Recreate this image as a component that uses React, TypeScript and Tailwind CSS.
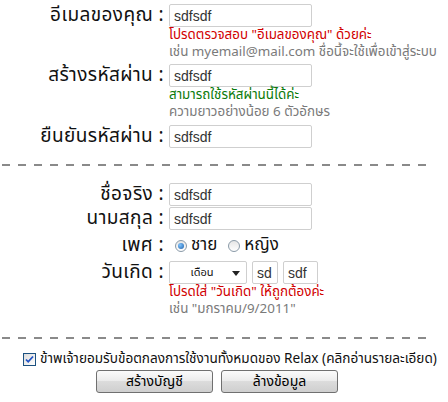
import React from 'react';

const thai = "font-[family-name:Tahoma,'Noto_Sans_Thai','Noto_Sans','DejaVu_Sans',sans-serif]";

const TextBox = ({ value, width = 'w-[143px]' }: { value: string; width?: string }) => (
  <input
    readOnly
    value={value}
    className={`${width} h-[23px] border border-[#cfcfcf] rounded-[2px] bg-white px-[4px] text-[14px] text-[#333] font-[family-name:'Liberation_Sans',Arial,sans-serif] outline-none`}
  />
);

const Row = ({ label, children, className = '' }: { label: string; children: React.ReactNode; className?: string }) => (
  <div className={`flex items-start ${className}`}>
    <div className="w-[165px] h-[23px] shrink-0 text-right text-[19px] leading-[23px] tracking-[0.4px] text-[#111] pr-[1px] whitespace-nowrap">{label}</div>
    <div className="ml-[4px] flex flex-col">{children}</div>
  </div>
);

const Divider = () => (
  <div className="ml-[2px] w-[430px] h-[2px] bg-[repeating-linear-gradient(to_right,#8a8a8a_0_8px,transparent_8px_16px)]" />
);

const Radio = ({ checked }: { checked?: boolean }) => (
  <span className="inline-flex w-[12px] h-[12px] rounded-full border border-[#8a9aa8] bg-[linear-gradient(#e6e6e6,#ffffff)] items-center justify-center">
    {checked && <span className="w-[6px] h-[6px] rounded-full bg-[radial-gradient(circle_at_35%_35%,#7fc4ff,#1e5fa8)]" />}
  </span>
);

const Button = ({ children }: { children: React.ReactNode }) => (
  <button className="w-[117px] h-[23px] border border-[#707070] rounded-[3px] bg-[linear-gradient(#fbfbfb,#ececec_45%,#dcdcdc_50%,#cfcfcf)] text-[14px] leading-[21px] text-black">
    {children}
  </button>
);

const Note = ({ color, children }: { color: string; children: React.ReactNode }) => (
  <div className={`h-[17px] text-[13.4px] leading-[17px] whitespace-nowrap ${color}`}>{children}</div>
);

export default function App() {
  return (
    <div className={`w-[448px] h-[402px] overflow-hidden bg-white pt-[4px] ${thai}`}>
      <Row label="อีเมลของคุณ :">
        <TextBox value="sdfsdf" />
        <Note color="text-[#d10000]">โปรดตรวจสอบ "อีเมลของคุณ" ด้วยค่ะ</Note>
        <Note color="text-[#7a7a7a]">เช่น myemail@mail.com ชื่อนี้จะใช้เพื่อเข้าสู่ระบบ</Note>
      </Row>
      <Row label="สร้างรหัสผ่าน :" className="mt-[3px]">
        <TextBox value="sdfsdf" />
        <Note color="text-[#0a7a0a]">สามารถใช้รหัสผ่านนี้ได้ค่ะ</Note>
        <Note color="text-[#7a7a7a]">ความยาวอย่างน้อย 6 ตัวอักษร</Note>
      </Row>
      <Row label="ยืนยันรหัสผ่าน :" className="mt-[4px]">
        <TextBox value="sdfsdf" />
      </Row>

      <div className="mt-[16px]">
        <Divider />
      </div>

      <Row label="ชื่อจริง :" className="mt-[17px]">
        <TextBox value="sdfsdf" />
      </Row>
      <Row label="นามสกุล :" className="mt-[1px]">
        <TextBox value="sdfsdf" />
      </Row>
      <Row label="เพศ :" className="mt-[4px]">
        <div className="flex items-center h-[23px] text-[17px] leading-[23px] text-[#111]">
          <span className="ml-[6px] flex"><Radio checked /></span>
          <span className="ml-[4px] h-[23px]">ชาย</span>
          <span className="ml-[11px] flex"><Radio /></span>
          <span className="ml-[4px] h-[23px]">หญิง</span>
        </div>
      </Row>
      <Row label="วันเกิด :" className="mt-[4px]">
        <div className="flex items-center gap-[5px] h-[23px]">
          <div className="relative w-[78px] h-[23px] border border-[#cfcfcf] rounded-[2px] bg-white flex items-center">
            <span className="w-[64px] text-center text-[11px] leading-[21px] h-[21px] text-[#111]">เดือน</span>
            <svg className="absolute right-[6px] top-[9px]" width="8" height="5" viewBox="0 0 8 5">
              <path d="M0 0h8L4 5z" fill="#222" />
            </svg>
          </div>
          <TextBox value="sd" width="w-[26px]" />
          <TextBox value="sdf" width="w-[35px]" />
        </div>
        <Note color="text-[#d10000]">โปรดใส่ "วันเกิด" ให้ถูกต้องค่ะ</Note>
        <Note color="text-[#7a7a7a]">เช่น "มกราคม/9/2011"</Note>
      </Row>

      <div className="mt-[19px]">
        <Divider />
      </div>

      <div className="mt-[12px] h-[17px] flex items-center justify-center pl-[12px] text-[13.6px] leading-[17px] text-[#111] whitespace-nowrap">
        <span className="inline-flex shrink-0 w-[13px] h-[13px] border border-[#1c5180] bg-[linear-gradient(135deg,#dcdcdc,#ffffff)] items-center justify-center mr-[4px]">
          <svg width="9" height="9" viewBox="0 0 9 9">
            <path d="M1 4.5l2.2 2.3L8 1.5" stroke="#2152c4" strokeWidth="1.8" fill="none" />
          </svg>
        </span>
        <span className="h-[17px]">ข้าพเจ้ายอมรับข้อตกลงการใช้งานทั้งหมดของ Relax (คลิกอ่านรายละเอียด)</span>
      </div>
      <div className="mt-[2px] flex justify-center gap-[8px] pr-[14px]">
        <Button>สร้างบัญชี</Button>
        <Button>ล้างข้อมูล</Button>
      </div>
    </div>
  );
}
